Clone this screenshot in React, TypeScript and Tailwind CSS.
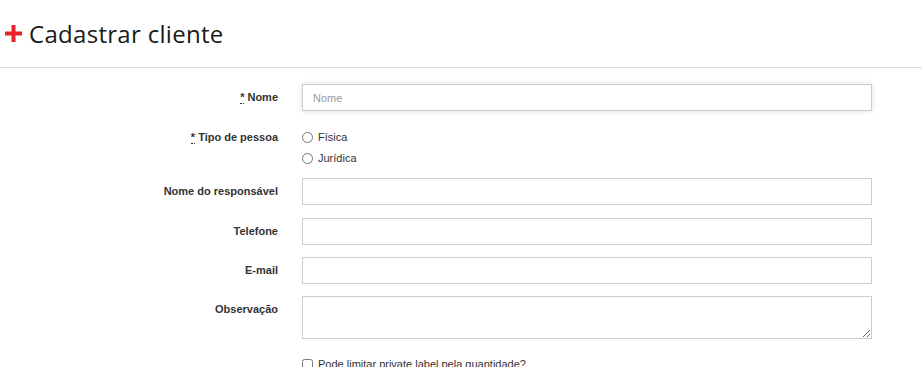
const labelCls =
  "w-[278px] shrink-0 text-right text-[11px] font-bold text-[#333] leading-none";
const inputCls =
  "ml-[24px] w-[570px] h-[27px] border border-[#ccc] bg-white px-[10px] text-[11px] text-[#333] outline-none";

function Required() {
  return (
    <abbr title="obrigatório" className="no-underline border-b border-dotted border-[#333] mr-[3px]">
      *
    </abbr>
  );
}

function PlusIcon() {
  return (
    <svg width="17" height="17" viewBox="0 0 17 17" className="mr-[7px]">
      <rect x="6.5" y="0" width="4" height="17" fill="#e8232b" />
      <rect x="0" y="6.5" width="17" height="4" fill="#e8232b" />
    </svg>
  );
}

export default function App() {
  return (
    <div className="w-[922px] h-[367px] overflow-hidden bg-white font-['Liberation_Sans',Arial,sans-serif]">
      {/* header */}
      <div className="h-[68px] flex items-center pl-[5px] border-b border-[#ddd]">
        <PlusIcon />
        <h1 className="text-[24px] font-medium text-[#1a1a1a] font-['Open_Sans',sans-serif] tracking-[0.3px]">
          Cadastrar cliente
        </h1>
      </div>

      <form className="pt-[16px]">
        <div className="flex items-center h-[27px]">
          <label className={labelCls}>
            <Required />
            Nome
          </label>
          <input
            placeholder="Nome"
            className={`${inputCls} border-[#aaa] shadow-[0_0_6px_rgba(0,0,0,0.12)] placeholder:text-[#999]`}
          />
        </div>

        <div className="flex mt-[16px]">
          <div className={`${labelCls} h-[21px] flex items-center justify-end`}>
            <Required />
            Tipo de pessoa
          </div>
          <div className="ml-[24px] flex flex-col">
            {["Física", "Jurídica"].map((t) => (
              <label key={t} className="h-[21px] flex items-center text-[11px] text-[#333]">
                <input type="radio" name="tipo" className="m-0 w-[11px] h-[11px] mr-[5px]" />
                {t}
              </label>
            ))}
          </div>
        </div>

        <div className="flex items-center h-[27px] mt-[9px]">
          <label className={labelCls}>Nome do responsável</label>
          <input className={inputCls} />
        </div>

        <div className="flex items-center h-[27px] mt-[13px]">
          <label className={labelCls}>Telefone</label>
          <input className={inputCls} />
        </div>

        <div className="flex items-center h-[27px] mt-[12px]">
          <label className={labelCls}>E-mail</label>
          <input className={inputCls} />
        </div>

        <div className="flex mt-[12px]">
          <label className={`${labelCls} h-[27px] flex items-center justify-end`}>Observação</label>
          <textarea className={`${inputCls} h-[43px] py-[6px]`} />
        </div>

        <div className="flex mt-[18px]">
          <div className="w-[278px] shrink-0" />
          <label className="ml-[24px] flex items-center h-[14px] text-[11px] text-[#333]">
            <input type="checkbox" className="m-0 w-[11px] h-[11px] mr-[5px]" />
            Pode limitar private label pela quantidade?
          </label>
        </div>
      </form>
    </div>
  );
}
